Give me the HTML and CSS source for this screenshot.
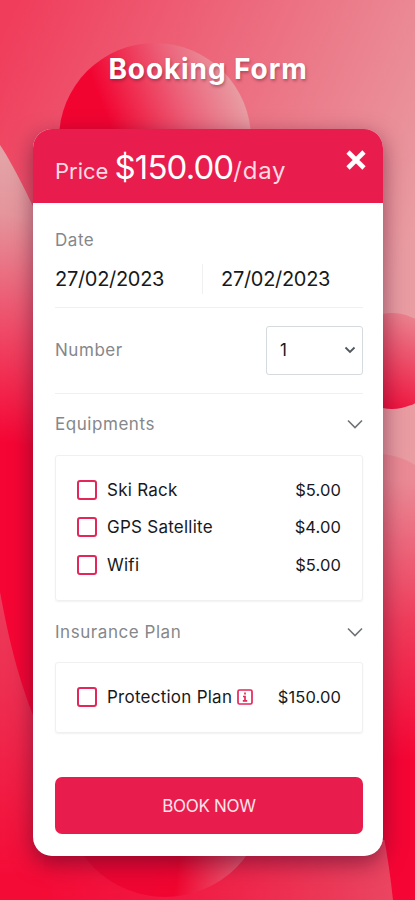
FILE: index.html
```html
<!DOCTYPE html>
<html lang="en">
<head>
  <meta charset="UTF-8">
  <meta name="viewport" content="width=device-width, initial-scale=1.0">
  <title>Booking Form</title>
  <link rel="stylesheet" href="styles.css">
</head>
<body>
  <svg class="backdrop" viewBox="0 0 415 900" aria-hidden="true">
    <defs>
      <linearGradient id="sky" gradientUnits="userSpaceOnUse" x1="0" y1="40" x2="415" y2="230">
        <stop offset="0" stop-color="#f03d5c"/>
        <stop offset="1" stop-color="#e99ca2"/>
      </linearGradient>
      <linearGradient id="ball" gradientUnits="userSpaceOnUse" x1="90" y1="125" x2="235" y2="70">
        <stop offset="0" stop-color="#f20431"/>
        <stop offset="0.12" stop-color="#f20431"/>
        <stop offset="0.6" stop-color="#ec5f77"/>
        <stop offset="1" stop-color="#e8a0a6"/>
      </linearGradient>
      <linearGradient id="leftWave" gradientUnits="userSpaceOnUse" x1="26" y1="160" x2="-14" y2="440">
        <stop offset="0" stop-color="#e3a3a6"/>
        <stop offset="0.2" stop-color="#e5959c"/>
        <stop offset="0.6" stop-color="#ef4b68"/>
        <stop offset="1" stop-color="#f50534"/>
      </linearGradient>
      <linearGradient id="leftLow" gradientUnits="userSpaceOnUse" x1="0" y1="592" x2="0" y2="880">
        <stop offset="0" stop-color="#ec3c5b"/>
        <stop offset="0.4" stop-color="#ee2b4f"/>
        <stop offset="1" stop-color="#f40b36"/>
      </linearGradient>
      <linearGradient id="dot" x1="0.3" y1="1" x2="0.7" y2="0">
        <stop offset="0" stop-color="#f00a38"/>
        <stop offset="1" stop-color="#ea8590"/>
      </linearGradient>
      <linearGradient id="rightWave" gradientUnits="userSpaceOnUse" x1="0" y1="480" x2="0" y2="760">
        <stop offset="0" stop-color="#ea8a95"/>
        <stop offset="0.5" stop-color="#ef3d5c"/>
        <stop offset="1" stop-color="#f50534"/>
      </linearGradient>
      <linearGradient id="lowBall" gradientUnits="userSpaceOnUse" x1="150" y1="870" x2="240" y2="885">
        <stop offset="0" stop-color="#ef0632"/>
        <stop offset="0.3" stop-color="#f0052f"/>
        <stop offset="1" stop-color="#ec5c74"/>
      </linearGradient>
      <linearGradient id="floor" gradientUnits="userSpaceOnUse" x1="40" y1="0" x2="390" y2="0">
        <stop offset="0" stop-color="#f40b36"/>
        <stop offset="0.4" stop-color="#f11a42"/>
        <stop offset="1" stop-color="#ea4561"/>
      </linearGradient>
    </defs>
    <rect width="415" height="900" fill="url(#sky)"/>
    <circle cx="155" cy="139" r="96" fill="url(#ball)"/>
    <path d="M0 145 C18 172 34 210 60 260 V900 H0Z" fill="url(#leftWave)"/>
    <path d="M0 592 C9 640 20 690 46 745 V900 H0Z" fill="url(#leftLow)"/>
    <circle cx="392" cy="361" r="48" fill="url(#dot)"/>
    <path d="M360 454 C385 452 400 456 415 465 V900 H360Z" fill="url(#rightWave)"/>
    <path d="M44 840 H400 V900 H44Z" fill="url(#floor)"/>
    <circle cx="165" cy="796" r="101" fill="url(#lowBall)"/>
    <path d="M360 740 C376 790 388 850 393 900 H415 V760 H360Z" fill="#f50534"/>
  </svg>

  <main class="page">
    <h1 class="title">Booking Form</h1>

    <form class="card">
      <header class="card-header">
        <p class="price">Price <span class="amount">$150.00</span><span class="per">/day</span></p>
        <svg class="close" viewBox="0 0 22 22"><path d="M3 3L19 19M19 3L3 19"/></svg>
      </header>

      <div class="card-body">
        <section class="dates">
          <span class="label">Date</span>
          <div class="date-row">
            <span class="date">27/02/2023</span>
            <span class="date date-end">27/02/2023</span>
          </div>
        </section>

        <section class="number">
          <span class="label">Number</span>
          <div class="select">
            <span>1</span>
            <svg class="caret" viewBox="0 0 12 8"><path d="M1.5 1.5L6 6L10.5 1.5"/></svg>
          </div>
        </section>

        <div class="section-head">
          <span class="label">Equipments</span>
          <svg class="chevron" viewBox="0 0 16 10"><path d="M1 1.5L8 8.5L15 1.5"/></svg>
        </div>
        <div class="options">
          <div class="option"><i class="box"></i><span>Ski Rack</span><span class="cost">$5.00</span></div>
          <div class="option"><i class="box"></i><span>GPS Satellite</span><span class="cost">$4.00</span></div>
          <div class="option"><i class="box"></i><span>Wifi</span><span class="cost">$5.00</span></div>
        </div>

        <div class="section-head insurance">
          <span class="label">Insurance Plan</span>
          <svg class="chevron" viewBox="0 0 16 10"><path d="M1 1.5L8 8.5L15 1.5"/></svg>
        </div>
        <div class="options plan">
          <div class="option">
            <i class="box"></i><span>Protection Plan</span>
            <svg class="info" viewBox="0 0 16 16"><rect x="1" y="1" width="14" height="14" rx="1.5"/><path d="M8 3.5V5.5M6 7.5H8V11.5M5.8 11.8H10.2"/></svg>
            <span class="cost">$150.00</span>
          </div>
        </div>

        <button class="book" type="button">BOOK NOW</button>
      </div>
    </form>
  </main>
</body>
</html>
```

FILE: styles.css
```css
* { box-sizing: border-box; }
body { margin: 0; height: 900px; overflow: hidden; position: relative; font-family: Inter, "Open Sans", sans-serif; color: #17191c; }
.backdrop { position: absolute; top: 0; left: 0; width: 415px; height: 900px; }
.page { position: relative; padding: 50px 32px 0 33px; }
.title { margin: 0; height: 79px; font-size: 28px; line-height: 38px; font-weight: 700; letter-spacing: 0.9px; text-align: center; color: #fff; text-shadow: 1px 2px 3px rgba(90, 20, 40, 0.4); }

.card { height: 727px; border-radius: 19px; background: #fff; overflow: hidden; box-shadow: 0 7px 22px rgba(70, 10, 40, 0.55); }
.card-header { height: 74px; padding: 0 16px 0 22px; display: flex; justify-content: space-between; background: #e81d4e; color: #fff; }
.price { margin: 0; font-size: 22px; line-height: 76px; color: #ffd9e1; white-space: nowrap; }
.amount { font-size: 33px; letter-spacing: -0.9px; color: #fff; }
.per { font-size: 24px; letter-spacing: 0.8px; }
.close { width: 22px; height: 22px; margin-top: 20px; fill: none; stroke: #fff; stroke-width: 4.6; }

.card-body { padding: 0 20px 0 22px; }
.label { font-size: 17px; letter-spacing: 0.55px; color: #85878a; }
.dates { height: 105px; padding-top: 27px; border-bottom: 1px solid #f0f0f1; line-height: 20px; }
.date-row { display: flex; margin-top: 14px; }
.date { width: 147px; height: 30px; line-height: 30px; font-size: 20px; letter-spacing: -0.3px; }
.date-end { border-left: 1px solid #f0f0f1; padding-left: 18px; }

.number { height: 86px; padding-bottom: 1px; display: flex; align-items: center; justify-content: space-between; border-bottom: 1px solid #f0f0f1; }
.select { width: 97px; height: 49px; padding: 0 6px 0 13px; display: flex; align-items: center; justify-content: space-between; border: 1px solid #d5dade; border-radius: 3px; font-size: 17px; }
.caret { width: 12px; height: 8px; fill: none; stroke: #50565c; stroke-width: 1.8; }

.section-head { height: 61px; padding-bottom: 2px; display: flex; align-items: center; justify-content: space-between; }
.insurance { padding-bottom: 0; }
.chevron { width: 16px; height: 10px; fill: none; stroke: #707376; stroke-width: 1.6; }
.options { height: 146px; padding: 15px 21px; border: 1px solid #f0f0f1; border-radius: 3px; box-shadow: 0 1px 2px rgba(0, 0, 0, 0.06); }
.option { height: 37.5px; display: flex; align-items: center; font-size: 17px; letter-spacing: 0.25px; white-space: nowrap; }
.box { width: 20px; height: 20px; margin-right: 10px; border: 2px solid #e3275a; border-radius: 3px; }
.cost { margin-left: auto; font-size: 16.5px; letter-spacing: 0.1px; }
.plan { height: 71px; }
.info { width: 16px; height: 16px; margin-left: 5px; fill: none; stroke: #e3275a; stroke-width: 1.7; }

.book { display: block; width: 100%; height: 57px; margin-top: 44px; padding: 0; border: 0; border-radius: 7px; background: #e81d4e; color: #ffe4ea; font: 400 17px Inter, sans-serif; letter-spacing: -0.3px; }
```
